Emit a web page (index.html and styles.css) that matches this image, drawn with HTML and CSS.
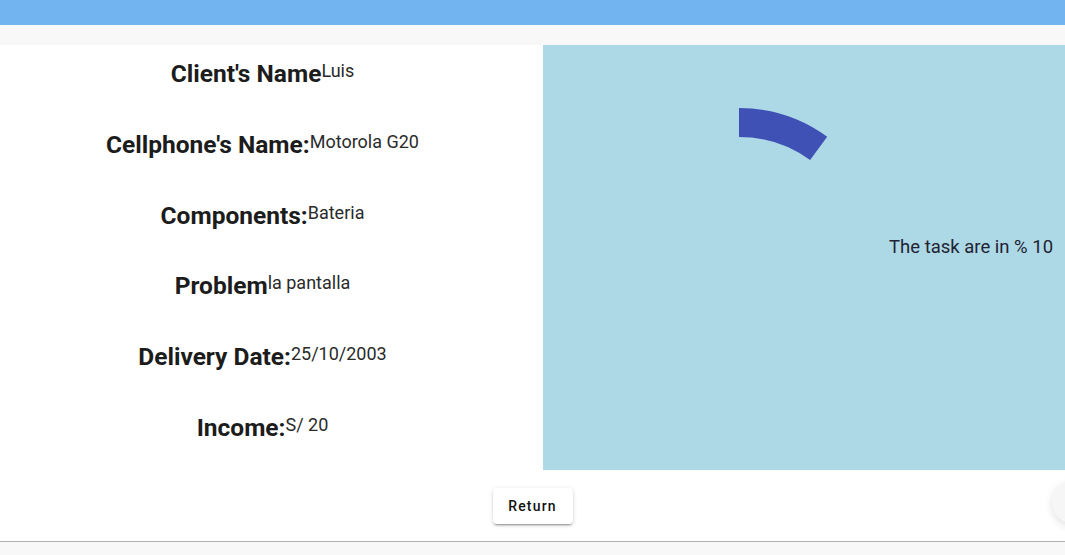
FILE: index.html
```html
<!DOCTYPE html>
<html lang="en">
<head>
<meta charset="utf-8">
<title>Task detail</title>
<link rel="stylesheet" href="styles.css">
</head>
<body>
<header class="topbar"></header>
<div class="band"></div>
<main class="content">
  <section class="panels">
    <div class="details">
      <div class="row"><h2 class="label">Client's Name</h2><span class="value">Luis</span></div>
      <div class="row"><h2 class="label">Cellphone's Name:</h2><span class="value">Motorola G20</span></div>
      <div class="row"><h2 class="label">Components:</h2><span class="value">Bateria</span></div>
      <div class="row"><h2 class="label">Problem</h2><span class="value">la pantalla</span></div>
      <div class="row"><h2 class="label">Delivery Date:</h2><span class="value">25/10/2003</span></div>
      <div class="row"><h2 class="label">Income:</h2><span class="value">S/ 20</span></div>
    </div>
    <div class="progress">
      <svg class="ring" width="300" height="300" viewBox="0 0 300 300">
        <path d="M150 14.5 A135.5 135.5 0 0 1 229.64 40.38" fill="none" stroke="#3f51b5" stroke-width="29"/>
      </svg>
      <span class="progress-text">The task are in % 10</span>
    </div>
  </section>
  <div class="actions">
    <button class="btn">Return</button>
  </div>
  <div class="fab"></div>
</main>
</body>
</html>
```

FILE: styles.css
```css
html, body {
  margin: 0;
  padding: 0;
}
body {
  background: #f8f8f9;
  font-family: Roboto, "Liberation Sans", Arial, sans-serif;
  width: 1065px;
  height: 555px;
  overflow: hidden;
}
.topbar {
  height: 25px;
  background: #72b4f0;
}
.band {
  height: 20px;
  background: #f8f8f9;
}
.content {
  position: relative;
  background: #fff;
  height: 497px;
  border-bottom: 1px solid #b3b3b3;
  box-sizing: border-box;
}
.panels {
  display: flex;
  height: 425px;
}
.details {
  width: 543px;
  box-sizing: border-box;
  padding-right: 18px;
  display: flex;
  flex-direction: column;
}
.row {
  height: 71px;
  box-sizing: border-box;
  padding-top: 15px;
  display: flex;
  justify-content: center;
  align-items: flex-start;
}
.label {
  margin: 0;
  font-size: 24.5px;
  line-height: 28px;
  font-weight: 700;
  color: #1c1c1c;
}
.value {
  font-size: 18px;
  line-height: 22px;
  color: #2a2a2a;
}
.progress {
  flex: 1;
  background: #add8e6;
  display: flex;
  align-items: center;
  padding-left: 46px;
}
.ring {
  display: block;
  flex-shrink: 0;
}
.progress-text {
  font-size: 18.5px;
  color: #1f2433;
  margin-bottom: 22px;
  white-space: nowrap;
}
.actions {
  display: flex;
  justify-content: center;
  padding-top: 18px;
}
.btn {
  width: 80px;
  height: 36px;
  border: none;
  border-radius: 4px;
  background: #fff;
  box-shadow: 0 3px 1px -2px rgba(0,0,0,0.2), 0 2px 2px 0 rgba(0,0,0,0.14), 0 1px 5px 0 rgba(0,0,0,0.12);
  font-family: Roboto, "Liberation Sans", Arial, sans-serif;
  font-size: 14px;
  font-weight: 500;
  letter-spacing: 1.2px;
  color: #111;
  cursor: pointer;
}
.fab {
  position: absolute;
  left: 1052px;
  top: 435px;
  width: 44px;
  height: 44px;
  border-radius: 50%;
  background: #f6f6f6;
  box-shadow: 0 3px 8px rgba(0,0,0,0.12);
}
```
